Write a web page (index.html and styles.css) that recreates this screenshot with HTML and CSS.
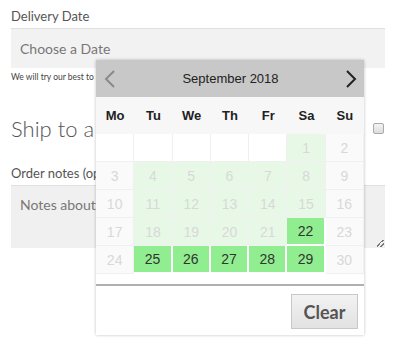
FILE: index.html
```html
<!DOCTYPE html>
<html lang="en">
<head>
    <meta charset="UTF-8">
    <meta name="viewport" content="width=device-width, initial-scale=1.0">
    <title>Checkout</title>
    <link rel="stylesheet" href="styles.css">
</head>
<body>
    <div class="checkout-form">
        <label class="field-label">Delivery Date</label>
        <div class="date-input">Choose a Date</div>
        <p class="field-help">We will try our best to deliver your order on the specified date</p>

        <div class="ship-row">
            <h3 class="ship-title">Ship to a different address?</h3>
            <span class="ship-check"></span>
        </div>

        <label class="field-label">Order notes (optional)</label>
        <div class="notes-input">Notes about your order, e.g. special notes for delivery.
            <span class="resize-grip"></span>
        </div>
    </div>

    <div class="datepicker">
        <div class="dp-header">
            <span class="dp-prev">
                <svg width="12" height="18" viewBox="0 0 12 18"><path d="M10 1 L2 9 L10 17" fill="none" stroke="#8a8a8a" stroke-width="2"/></svg>
            </span>
            <span class="dp-month">September 2018</span>
            <span class="dp-next">
                <svg width="12" height="18" viewBox="0 0 12 18"><path d="M2 1 L10 9 L2 17" fill="none" stroke="#222" stroke-width="2"/></svg>
            </span>
        </div>
        <div class="dp-days" id="dp-days"></div>
        <div class="dp-grid" id="dp-grid"></div>
        <div class="dp-footer">
            <button class="dp-clear">Clear</button>
        </div>
    </div>

    <script>
        const dayNames = ['Mo', 'Tu', 'We', 'Th', 'Fr', 'Sa', 'Su'];
        const available = [22, 25, 26, 27, 28, 29];

        const daysRow = document.getElementById('dp-days');
        const grid = document.getElementById('dp-grid');

        dayNames.forEach(name => {
            const d = document.createElement('span');
            d.textContent = name;
            daysRow.appendChild(d);
        });

        // September 2018 starts on a Saturday
        for (let i = 0; i < 5; i++) {
            const blank = document.createElement('span');
            blank.classList.add('dp-cell', 'blank');
            grid.appendChild(blank);
        }

        for (let day = 1; day <= 30; day++) {
            const cell = document.createElement('span');
            const col = (day + 4) % 7;
            cell.classList.add('dp-cell');
            if (available.includes(day)) {
                cell.classList.add('on');
            } else if (col === 0 || col === 6) {
                cell.classList.add('off');
            } else {
                cell.classList.add('past');
            }
            cell.textContent = day;
            grid.appendChild(cell);
        }
    </script>
</body>
</html>
```

FILE: styles.css
```css
body {
    margin: 0;
    padding: 0 14px 0 11px;
    font-family: Lato, "Open Sans", sans-serif;
    color: #555;
    background: #fff;
}

.checkout-form {
    padding-top: 6px;
}

.field-label {
    display: block;
    font-size: 13px;
    line-height: 20px;
    color: #555;
}

.date-input {
    margin-top: 2px;
    height: 40px;
    line-height: 40px;
    padding-left: 9px;
    background-color: #f2f2f2;
    border-top: 1px solid #e0e0e0;
    box-sizing: border-box;
    font-size: 14px;
    color: #777;
    white-space: nowrap;
    overflow: hidden;
}

.field-help {
    margin: 2px 0 0;
    font-size: 8.5px;
    line-height: 14px;
    color: #444;
    white-space: nowrap;
    overflow: hidden;
}

.ship-row {
    display: flex;
    align-items: center;
    justify-content: space-between;
    margin-top: 30px;
    height: 28px;
}

.ship-title {
    margin: 0;
    font-size: 22px;
    font-weight: 300;
    color: #555;
    white-space: nowrap;
}

.ship-check {
    width: 9px;
    height: 9px;
    margin-right: 1px;
    border: 1px solid #aaa;
    border-radius: 2px;
    background: linear-gradient(#f4f4f4, #dcdcdc);
    flex-shrink: 0;
}

.ship-row + .field-label {
    margin-top: 21px;
}

.notes-input {
    position: relative;
    margin-top: 2px;
    height: 63px;
    padding: 10px 9px;
    box-sizing: border-box;
    background-color: #f0f0f0;
    border-top: 1px solid #e0e0e0;
    font-size: 14px;
    color: #777;
    white-space: nowrap;
    overflow: hidden;
}

.resize-grip {
    position: absolute;
    right: 1px;
    bottom: 1px;
    width: 7px;
    height: 7px;
    background: linear-gradient(135deg, transparent 40%, #777 40%, #777 50%, transparent 50%, transparent 70%, #777 70%, #777 80%, transparent 80%);
}

/* date picker popup */
.datepicker {
    position: absolute;
    left: 96px;
    top: 60px;
    width: 268px;
    background: #fff;
    box-shadow: 0 0 3px rgba(0, 0, 0, 0.25);
    font-family: "Liberation Sans", Arial, sans-serif;
}

.dp-header {
    display: flex;
    align-items: center;
    justify-content: space-between;
    height: 37px;
    padding: 0 7px 0 8px;
    background-color: #c8c8c8;
}

.dp-prev,
.dp-next {
    display: flex;
}

.dp-month {
    font-size: 13px;
    color: #222;
}

.dp-days {
    display: grid;
    grid-template-columns: repeat(7, 1fr);
    height: 37px;
    align-items: center;
    background-color: #f7f7f7;
    text-align: center;
    font-size: 13px;
    font-weight: bold;
    color: #222;
}

.dp-grid {
    display: grid;
    grid-template-columns: repeat(7, 1fr);
    grid-auto-rows: 28px;
    margin-bottom: 10px;
}

.dp-cell {
    display: flex;
    align-items: center;
    justify-content: center;
    border-right: 1px solid #f0f0f0;
    border-bottom: 1px solid #f0f0f0;
    font-size: 14px;
    color: #d8d8d8;
}

.dp-cell.blank {
    background-color: #fff;
}

.dp-cell.off {
    background-color: #fafafa;
}

.dp-cell.past {
    background-color: #e7f8e7;
}

.dp-cell.on {
    background-color: #90ee90;
    border-color: #fff;
    border-width: 0 2px 2px 0;
    color: #333;
}

.dp-footer {
    display: flex;
    justify-content: flex-end;
    padding: 8px 6px 6px;
    border-top: 2px solid #b0b0b0;
}

.dp-clear {
    width: 67px;
    height: 35px;
    border: 1px solid #c8c8c8;
    background: linear-gradient(#f2f2f2, #e2e2e2);
    font-family: Lato, "Open Sans", sans-serif;
    font-size: 18px;
    font-weight: bold;
    color: #555;
    cursor: pointer;
}
```
